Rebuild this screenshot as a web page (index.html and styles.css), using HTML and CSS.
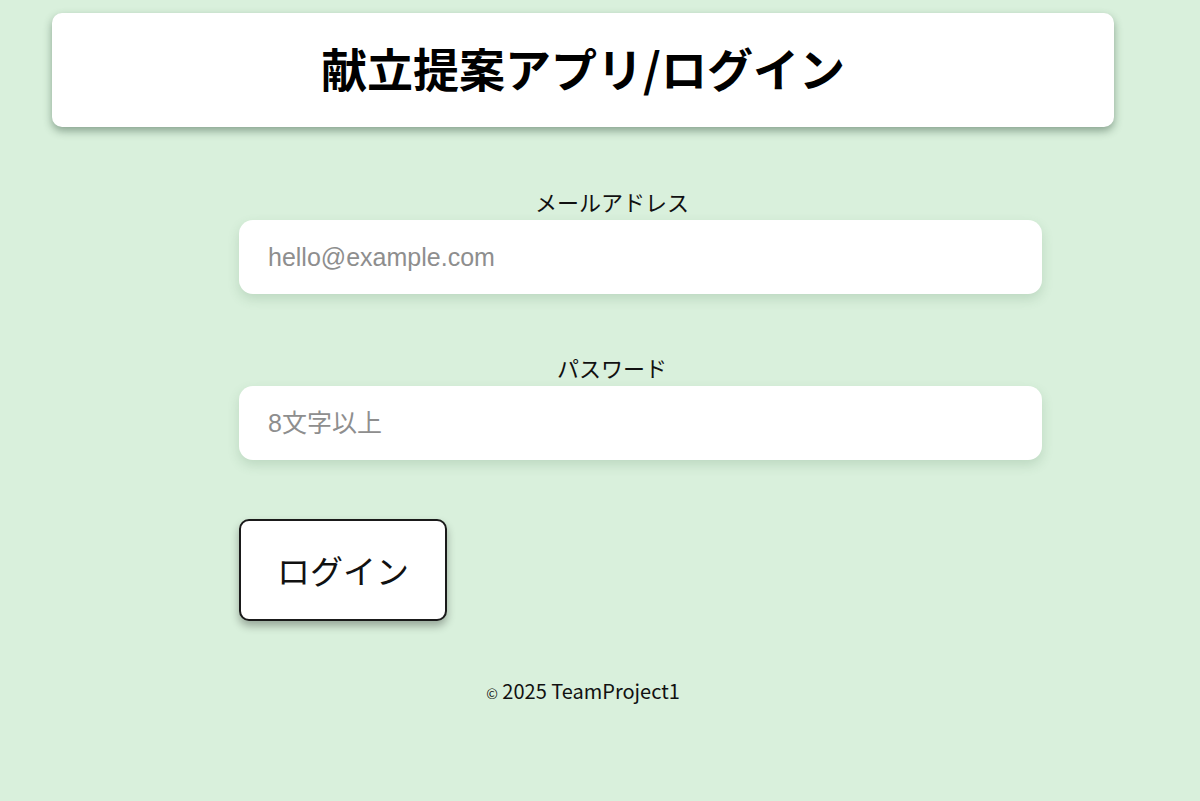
FILE: index.html
```html
<!DOCTYPE html>
<html lang="ja">
  <head>
    <meta charset="UTF-8" />
    <meta name="viewport" content="width=device-width, initial-scale=1.0" />
    <title>献立提案アプリ/ログイン</title>
    <link rel="stylesheet" href="styles.css">
  </head>
  <body>
    <div class="page">
      <header class="header">
        <h1>献立提案アプリ/ログイン</h1>
      </header>

      <form class="login-form" onsubmit="return false;">
        <div class="field">
          <label for="email">メールアドレス</label>
          <input type="email" id="email" placeholder="hello@example.com" />
        </div>
        <div class="field">
          <label for="password">パスワード</label>
          <input type="password" id="password" placeholder="8文字以上" />
        </div>
        <button type="submit" class="btn">ログイン</button>
      </form>

      <footer class="footer">
        <small>&copy;</small> 2025 TeamProject1
      </footer>
    </div>
  </body>
</html>
```

FILE: styles.css
```css
body {
  margin: 0;
  padding: 0;
  background-color: #d9f0dc;
  font-family: "Noto Sans CJK JP", "Noto Sans", sans-serif;
  color: #111;
}

.page {
  width: 1166px;
  padding-top: 13px;
}

.header {
  margin: 0 52px;
  height: 114px;
  padding-bottom: 6px;
  box-sizing: border-box;
  display: flex;
  align-items: center;
  justify-content: center;
  background-color: #fff;
  border-radius: 10px;
  box-shadow: 0 4px 8px rgba(40, 70, 50, 0.45);
}

.header h1 {
  margin: 0;
  font-size: 46px;
  font-weight: 700;
  color: #000;
}

.login-form {
  width: 746px;
  margin: 58px 0 0 239px;
}

.field {
  margin-bottom: 57px;
}

.field label {
  display: block;
  text-align: center;
  font-size: 22px;
  line-height: 33px;
  margin-bottom: 2px;
  color: #111;
}

.field input {
  width: 100%;
  height: 74px;
  padding: 0 28px 0 29px;
  border: none;
  border-radius: 14px;
  background-color: #fff;
  font-family: "Liberation Sans", Arial, "Noto Sans CJK JP", sans-serif;
  font-size: 25px;
  color: #333;
  box-shadow: 0 5px 12px rgba(60, 110, 70, 0.18);
  outline: none;
}

.field input::placeholder {
  color: #8e8e8e;
}

.btn {
  width: 208px;
  height: 102px;
  margin-top: 2px;
  background-color: #fff;
  border: 2px solid #1a1a1a;
  border-radius: 10px;
  font-family: "Noto Sans CJK JP", sans-serif;
  font-size: 33px;
  color: #111;
  cursor: pointer;
  box-shadow: 0 5px 9px rgba(0, 0, 0, 0.3);
}

.footer {
  margin-top: 55px;
  text-align: center;
  font-size: 20px;
  color: #111;
}

.footer small {
  font-size: 14px;
}
```
